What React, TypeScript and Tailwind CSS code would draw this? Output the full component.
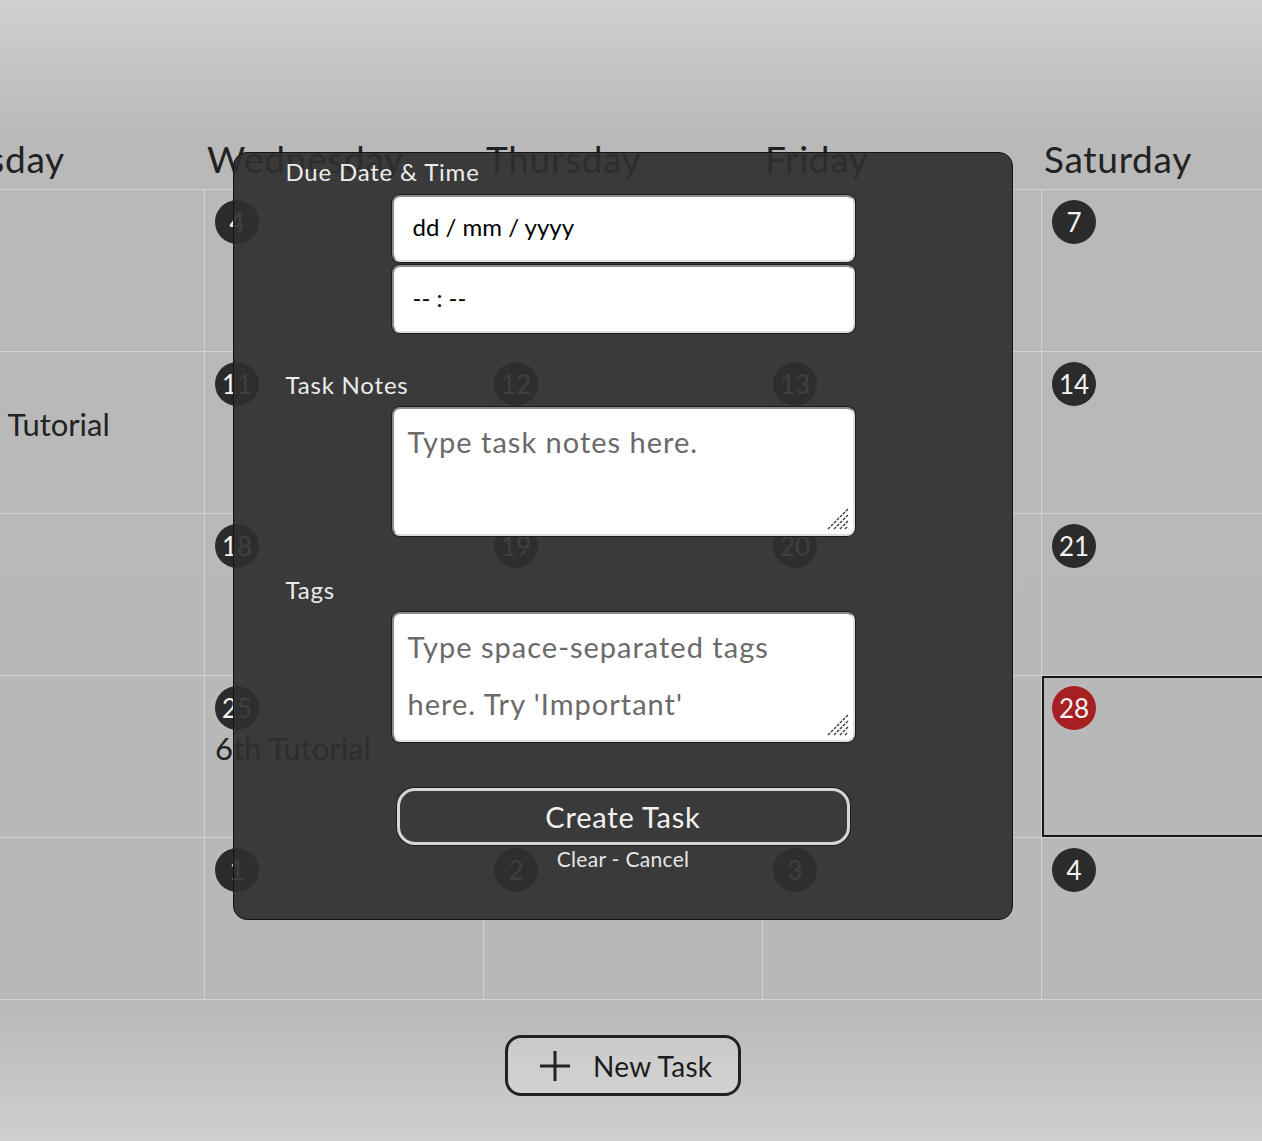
import React from 'react';

const FONT = "font-['Lato','Noto_Sans',sans-serif]";

const DAYS = ['Sunday', 'Monday', 'Tuesday', 'Wednesday', 'Thursday', 'Friday', 'Saturday'];

const WEEKS: number[][] = [
  [1, 2, 3, 4, 5, 6, 7],
  [8, 9, 10, 11, 12, 13, 14],
  [15, 16, 17, 18, 19, 20, 21],
  [22, 23, 24, 25, 26, 27, 28],
  [29, 30, 31, 1, 2, 3, 4],
];

// tasks keyed by "week-day"
const TASKS: Record<string, string> = {
  '1-2': '11th Tutorial',
  '3-3': '6th Tutorial',
};

const TODAY = '3-6';

function ResizeGrip() {
  return (
    <svg className="pointer-events-none absolute bottom-[5px] right-[5px]" width="24" height="24" viewBox="0 0 24 24">
      <g stroke="#3a3a3a" strokeWidth="1.4" strokeDasharray="3 1.2">
        <line x1="2" y1="22" x2="22" y2="2" />
        <line x1="8" y1="22" x2="22" y2="8" />
        <line x1="14" y1="22" x2="22" y2="14" />
        <line x1="19" y1="22" x2="22" y2="19" />
      </g>
    </svg>
  );
}

function Field({ children, className = '' }: { children: React.ReactNode; className?: string }) {
  return (
    <div
      className={`flex items-center rounded-[8px] border-2 border-t-[#8c8c8c] border-l-[#8c8c8c] border-r-[#dedede] border-b-[#dedede] bg-white px-[19px] pb-[3px] text-[24px] text-black shadow-[0_0_0_1px_#1c1c1c] ${className}`}
    >
      {children}
    </div>
  );
}

function Area({ placeholder, className = '' }: { placeholder: string; className?: string }) {
  return (
    <div className={`relative ${className}`}>
      <textarea
        readOnly
        placeholder={placeholder}
        className={`block h-full w-full resize-none rounded-[8px] border-2 border-t-[#8c8c8c] border-l-[#8c8c8c] border-r-[#dedede] border-b-[#dedede] bg-white px-[14px] pt-[4px] text-[29px] leading-[57px] tracking-[1px] text-black shadow-[0_0_0_1px_#1c1c1c] outline-none placeholder:text-[#6a6a6a] ${FONT}`}
      />
      <ResizeGrip />
    </div>
  );
}

function Label({ children, className = '' }: { children: React.ReactNode; className?: string }) {
  return (
    <div className={`-ml-[106px] text-[24px] leading-[28px] tracking-[0.8px] text-[#ececec] ${className}`}>{children}</div>
  );
}

function TaskModal() {
  return (
    <div className="absolute left-[233px] top-[152px] flex h-[768px] w-[780px] flex-col items-center rounded-[14px] border border-[#141414] bg-[rgba(47,47,47,0.92)]">
      <div className="flex w-[463px] flex-col">
        <Label className="mt-[5px]">Due Date &amp; Time</Label>
        <Field className="mt-[9px] h-[67px]">dd / mm / yyyy</Field>
        <Field className="mt-[3px] h-[68px]">-- : --</Field>

        <Label className="mt-[38px]">Task Notes</Label>
        <Area className="mt-[8px] h-[129px]" placeholder="Type task notes here." />

        <Label className="mt-[40px]">Tags</Label>
        <Area className="mt-[8px] h-[130px]" placeholder={"Type space-separated tags\nhere. Try 'Important'"} />

        <button className="mx-auto mt-[46px] flex h-[57px] w-[453px] items-center justify-center rounded-[18px] border-[3px] border-[#d6d6d6] text-[29px] tracking-[0.8px] text-[#f2f2f2] shadow-[0_0_0_1px_#1c1c1c]">
          Create Task
        </button>
        <div className="mt-[2px] text-center text-[21px] leading-[24px] tracking-[0.3px] text-[#e6e6e6]">
          <span>Clear</span> - <span>Cancel</span>
        </div>
      </div>
    </div>
  );
}

function Calendar() {
  return (
    <div className="w-full overflow-hidden">
      <div className="ml-[-633px] w-[1953px]">
        <div className="flex h-[60px] border-b border-[#d2d2d2]">
          {DAYS.map((d) => (
            <div
              key={d}
              className="flex w-[279px] shrink-0 items-end pb-[8px] pl-[3px] text-[37px] leading-[44px] tracking-[0.7px] text-[#222]"
            >
              {d}
            </div>
          ))}
        </div>
        {WEEKS.map((week, wi) => (
          <div key={wi} className="flex h-[162px] border-b border-[#d2d2d2]">
            {week.map((n, di) => {
              const key = `${wi}-${di}`;
              const today = key === TODAY;
              return (
                <div
                  key={di}
                  className={`flex w-[279px] shrink-0 flex-col border-l border-[#d2d2d2] pl-[10px] pt-[10px] ${today ? 'shadow-[inset_0_0_0_2px_#161616]' : ''}`}
                >
                  <div
                    className={`flex h-[44px] w-[44px] items-center justify-center rounded-full text-[26px] text-[#f4f4f4] ${today ? 'bg-[#a61f22]' : 'bg-[#2b2b2b]'}`}
                  >
                    {n}
                  </div>
                  {TASKS[key] && (
                    <div className="whitespace-nowrap text-[31px] leading-[36px] text-[#222]">{TASKS[key]}</div>
                  )}
                </div>
              );
            })}
          </div>
        ))}
      </div>
    </div>
  );
}

export default function App() {
  return (
    <div
      className={`relative h-[1141px] w-full overflow-hidden bg-[linear-gradient(to_bottom,#d0d0d0_0px,#b9b9b9_135px,#b8b8b8_1000px,#cfcfcf_1141px)] ${FONT}`}
    >
      <div className="h-[130px]" />
      <Calendar />
      <div className="flex w-[1246px] justify-center pt-[35px]">
        <button className="flex h-[61px] w-[236px] items-center rounded-[16px] border-[3px] border-[#222] bg-white/20 pl-[31px] text-[28px] tracking-[0.3px] text-[#1c1c1c]">
          <svg width="32" height="32" viewBox="0 0 32 32" className="mr-[22px]">
            <path d="M16 1v30M1 16h30" stroke="#222" strokeWidth="3" fill="none" />
          </svg>
          New Task
        </button>
      </div>
      <TaskModal />
    </div>
  );
}
